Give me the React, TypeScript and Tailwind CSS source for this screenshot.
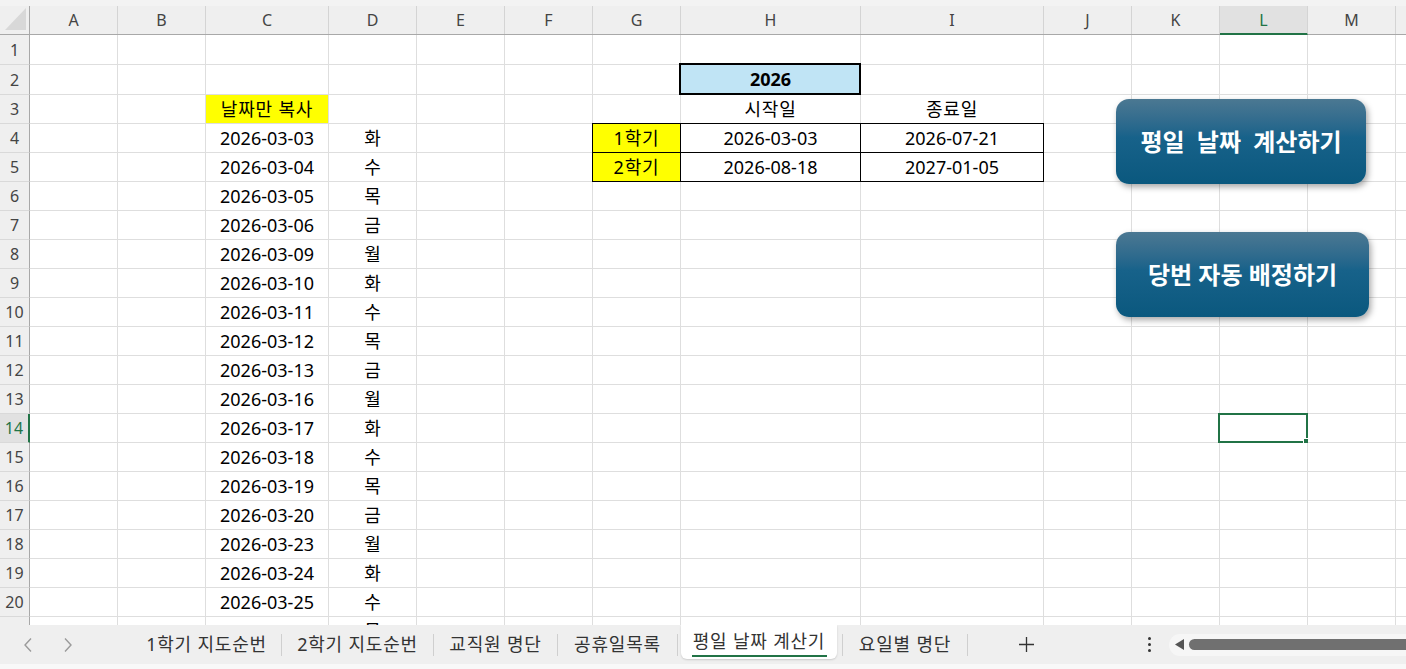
import React from "react";

const COLS: { k: string; w: string }[] = [
  { k: "A", w: "w-[88px]" },
  { k: "B", w: "w-[88px]" },
  { k: "C", w: "w-[123px]" },
  { k: "D", w: "w-[88px]" },
  { k: "E", w: "w-[88px]" },
  { k: "F", w: "w-[88px]" },
  { k: "G", w: "w-[88px]" },
  { k: "H", w: "w-[180px]" },
  { k: "I", w: "w-[183px]" },
  { k: "J", w: "w-[88px]" },
  { k: "K", w: "w-[88px]" },
  { k: "L", w: "w-[88px]" },
  { k: "M", w: "w-[88px]" },
  { k: "N", w: "w-[88px]" },
];

const DATES: [string, string][] = [
  ["2026-03-03", "화"],
  ["2026-03-04", "수"],
  ["2026-03-05", "목"],
  ["2026-03-06", "금"],
  ["2026-03-09", "월"],
  ["2026-03-10", "화"],
  ["2026-03-11", "수"],
  ["2026-03-12", "목"],
  ["2026-03-13", "금"],
  ["2026-03-16", "월"],
  ["2026-03-17", "화"],
  ["2026-03-18", "수"],
  ["2026-03-19", "목"],
  ["2026-03-20", "금"],
  ["2026-03-23", "월"],
  ["2026-03-24", "화"],
  ["2026-03-25", "수"],
  ["2026-03-26", "목"],
];

type CellSpec = {
  text?: string;
  bg?: string;
  bold?: boolean;
  kor?: boolean;
  border?: "thin" | "thick";
  selected?: boolean;
};

function cellFor(row: number, col: string): CellSpec {
  if (col === "C" && row === 3) return { text: "날짜만 복사", bg: "bg-[#ffff00]", kor: true };
  if (row >= 4 && row <= 21) {
    const d = DATES[row - 4];
    if (col === "C") return { text: d[0] };
    if (col === "D") return { text: d[1] };
  }
  if (row === 2 && col === "H") return { text: "2026", bg: "bg-[#c0e4f5]", bold: true, border: "thick" };
  if (row === 3 && col === "H") return { text: "시작일", kor: true };
  if (row === 3 && col === "I") return { text: "종료일", kor: true };
  if (row === 4 && col === "G") return { text: "1학기", bg: "bg-[#ffff00]", border: "thin", kor: true };
  if (row === 5 && col === "G") return { text: "2학기", bg: "bg-[#ffff00]", border: "thin", kor: true };
  if (row === 4 && col === "H") return { text: "2026-03-03", border: "thin" };
  if (row === 4 && col === "I") return { text: "2026-07-21", border: "thin" };
  if (row === 5 && col === "H") return { text: "2026-08-18", border: "thin" };
  if (row === 5 && col === "I") return { text: "2027-01-05", border: "thin" };
  if (row === 14 && col === "L") return { selected: true };
  return {};
}

function Row({ n }: { n: number }) {
  const h = n <= 2 ? "h-[30px]" : "h-[29px]";
  const active = n === 14;
  return (
    <div className={`flex shrink-0 ${h}`}>
      <div
        className={`w-[30px] shrink-0 flex items-center justify-center border-b border-[#d9d9d9] text-[16px] ${
          active
            ? "bg-[#e1e1e1] text-[#217346] border-r-2 border-r-[#217346]"
            : "bg-[#efefef] text-[#444] border-r border-r-[#a8a8a8]"
        }`}
      >
        {n}
      </div>
      {COLS.map((c) => {
        const s = cellFor(n, c.k);
        return (
          <div
            key={c.k}
            className={`${c.w} shrink-0 relative flex items-center justify-center border-r border-b border-[#dedede] text-[18px] text-black whitespace-nowrap ${
              s.bg ?? "bg-white"
            } ${s.bold ? "font-bold" : ""} ${s.kor ? "tracking-[0.8px]" : ""}`}
          >
            {s.text}
            {s.border === "thin" && (
              <span className="absolute -left-px -top-px -right-px -bottom-px border border-black pointer-events-none" />
            )}
            {s.border === "thick" && (
              <span className="absolute -left-[2px] -top-[2px] -right-px -bottom-px border-2 border-black pointer-events-none" />
            )}
            {s.selected && (
              <span className="absolute -left-[2px] -top-[1px] -right-px -bottom-px border-2 border-[#217346] pointer-events-none">
                <span className="absolute -right-[4px] -bottom-[4px] w-[7px] h-[7px] bg-[#217346] border border-white" />
              </span>
            )}
          </div>
        );
      })}
    </div>
  );
}

function Header() {
  return (
    <div className="flex flex-col shrink-0 h-[35px] bg-[#efefef]">
      <div className="h-[6px] bg-[#f3f3f3]" />
      <div className="flex h-[29px] border-b border-[#a8a8a8]">
        <div className="w-[30px] shrink-0 relative border-r border-[#a8a8a8]">
          <svg className="absolute left-[5px] top-[2px]" width="21" height="22" viewBox="0 0 21 22">
            <polygon points="21,0 21,22 0,22" fill="#d8d8d8" />
          </svg>
        </div>
        {COLS.map((c) =>
          c.k === "L" ? (
            <div
              key={c.k}
              className={`${c.w} shrink-0 flex items-center justify-center bg-[#e1e1e1] border-r border-[#d4d4d4] border-b-2 border-b-[#217346] -mb-px text-[16px] text-[#217346]`}
            >
              {c.k}
            </div>
          ) : (
            <div
              key={c.k}
              className={`${c.w} shrink-0 flex items-center justify-center border-r border-[#d4d4d4] text-[16px] text-[#444]`}
            >
              {c.k}
            </div>
          )
        )}
      </div>
    </div>
  );
}

function Sep() {
  return <div className="w-px h-[22px] bg-[#cfcfcf] shrink-0" />;
}

function Tab({ label, w }: { label: string; w: string }) {
  return (
    <div className={`${w} shrink-0 flex justify-center text-[18px] tracking-[0.8px] text-[#333] whitespace-nowrap`}>
      {label}
    </div>
  );
}

function TabBar() {
  return (
    <div className="flex flex-col shrink-0">
      <div className="h-[39px] bg-[#efefef] flex items-center">
        <div className="w-[132px] shrink-0 flex items-center">
          <svg className="ml-[23px]" width="10" height="16" viewBox="0 0 10 16" fill="none">
            <path d="M8 1.5 L2 8 L8 14.5" stroke="#9a9a9a" strokeWidth="1.4" />
          </svg>
          <svg className="ml-[30px]" width="10" height="16" viewBox="0 0 10 16" fill="none">
            <path d="M2 1.5 L8 8 L2 14.5" stroke="#9a9a9a" strokeWidth="1.4" />
          </svg>
        </div>
        <Tab label="1학기 지도순번" w="w-[149px]" />
        <Sep />
        <Tab label="2학기 지도순번" w="w-[151px]" />
        <Sep />
        <Tab label="교직원 명단" w="w-[123px]" />
        <Sep />
        <Tab label="공휴일목록" w="w-[119px]" />
        <Sep />
        <div className="self-start ml-[3px] mr-[5px] w-[156px] shrink-0 h-[34px] bg-white rounded-b-[6px] shadow-[0_1px_2px_rgba(0,0,0,0.15)] flex flex-col items-center justify-center">
          <div className="text-[18px] tracking-[0.8px] text-[#333] whitespace-nowrap leading-[22px] mt-[2px]">평일 날짜 계산기</div>
          <div className="h-[2px] w-[135px] bg-[#217346] mt-[3px]" />
        </div>
        <Sep />
        <Tab label="요일별 명단" w="w-[124px]" />
        <Sep />
        <div className="ml-[48px] w-[20px] shrink-0 flex items-center justify-center">
          <svg width="17" height="17" viewBox="0 0 17 17">
            <path d="M8.5 1 V16 M1 8.5 H16" stroke="#333" strokeWidth="1.3" />
          </svg>
        </div>
        <div className="ml-[110px] w-[6px] shrink-0 flex flex-col items-center gap-[3px]">
          <div className="w-[3px] h-[3px] bg-[#333] rounded-full" />
          <div className="w-[3px] h-[3px] bg-[#333] rounded-full" />
          <div className="w-[3px] h-[3px] bg-[#333] rounded-full" />
        </div>
        <div className="ml-[17px] flex-1 h-[22px] bg-[#f6f6f6] rounded-l-full flex items-center">
          <svg className="ml-[6px]" width="9" height="11" viewBox="0 0 9 11">
            <polygon points="9,0 9,11 0,5.5" fill="#555" />
          </svg>
          <div className="ml-[5px] flex-1 h-[11px] bg-[#707070] rounded-l-full" />
        </div>
      </div>
      <div className="h-[5px] bg-[#f8f8f8]" />
    </div>
  );
}

export default function App() {
  const rows = Array.from({ length: 21 }, (_, i) => i + 1);
  return (
    <div className="relative w-[1406px] h-[669px] overflow-hidden bg-white flex flex-col font-['Noto_Sans','Noto_Sans_CJK_KR',sans-serif]">
      <Header />
      <div className="h-[590px] shrink-0 overflow-hidden flex flex-col">
        {rows.map((n) => (
          <Row key={n} n={n} />
        ))}
      </div>
      <TabBar />

      <button className="absolute left-[1116px] top-[99px] w-[250px] h-[85px] rounded-[13px] bg-gradient-to-b from-[#4b7892] via-[#17628a] via-45% to-[#0a587e] shadow-[2px_3px_6px_rgba(0,0,0,0.35)] text-white font-bold text-[24px] [word-spacing:6px] flex items-center justify-center">
        평일 날짜 계산하기
      </button>
      <button className="absolute left-[1116px] top-[232px] w-[253px] h-[85px] rounded-[13px] bg-gradient-to-b from-[#4b7892] via-[#17628a] via-45% to-[#0a587e] shadow-[2px_3px_6px_rgba(0,0,0,0.35)] text-white font-bold text-[24px] flex items-center justify-center">
        당번 자동 배정하기
      </button>
    </div>
  );
}
